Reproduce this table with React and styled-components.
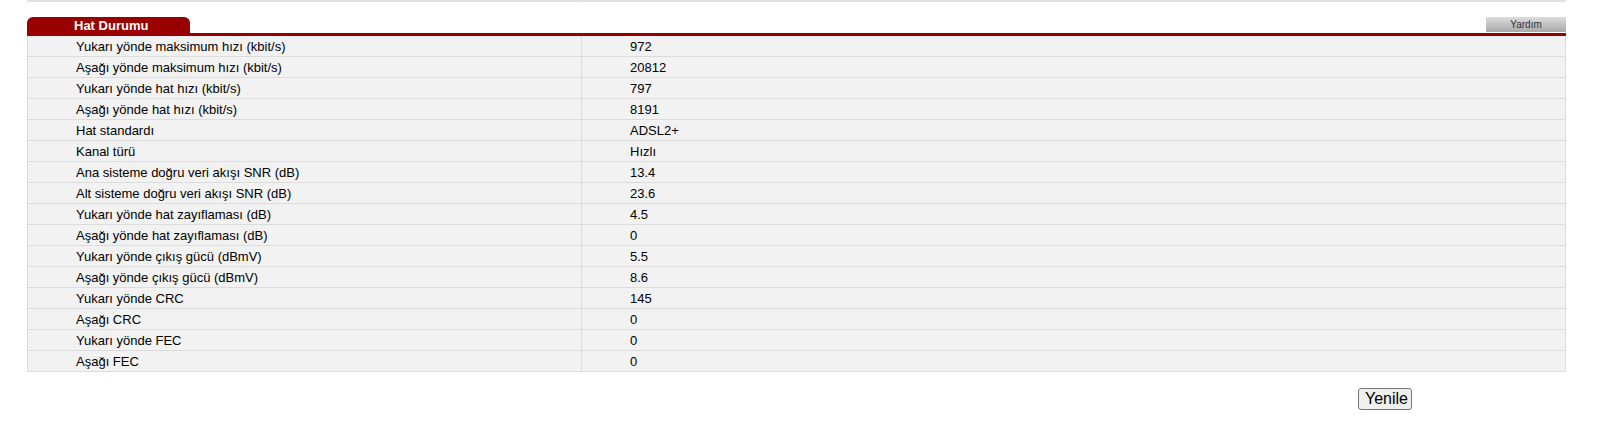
import React from "react";
import styled, { createGlobalStyle } from "styled-components";

const rows = [
  ["Yukarı yönde maksimum hızı (kbit/s)", "972"],
  ["Aşağı yönde maksimum hızı (kbit/s)", "20812"],
  ["Yukarı yönde hat hızı (kbit/s)", "797"],
  ["Aşağı yönde hat hızı (kbit/s)", "8191"],
  ["Hat standardı", "ADSL2+"],
  ["Kanal türü", "Hızlı"],
  ["Ana sisteme doğru veri akışı SNR (dB)", "13.4"],
  ["Alt sisteme doğru veri akışı SNR (dB)", "23.6"],
  ["Yukarı yönde hat zayıflaması (dB)", "4.5"],
  ["Aşağı yönde hat zayıflaması (dB)", "0"],
  ["Yukarı yönde çıkış gücü (dBmV)", "5.5"],
  ["Aşağı yönde çıkış gücü (dBmV)", "8.6"],
  ["Yukarı yönde CRC", "145"],
  ["Aşağı CRC", "0"],
  ["Yukarı yönde FEC", "0"],
  ["Aşağı FEC", "0"],
];

const GlobalStyle = createGlobalStyle`
  body {
    margin: 0;
    background: #fff;
    font-family: "Liberation Sans", Arial, sans-serif;
  }
`;

const Page = styled.div`
  width: 1539px;
  margin-left: 27px;
`;

const PrevRow = styled.div`
  display: grid;
  grid-template-columns: 554px 1fr;
  height: 2px;
  background: #e2e2e2;

  .split {
    border-right: 1px solid #d0d0d0;
  }
`;

const Header = styled.div`
  display: flex;
  justify-content: space-between;
  align-items: flex-end;
  margin-top: 15px;
  border-bottom: 3px solid #990000;
`;

const Tab = styled.div`
  width: 163px;
  height: 16px;
  background: #990000;
  border-radius: 6px 6px 0 0;
  color: #fff;
  font-size: 13px;
  font-weight: bold;
  line-height: 17px;
  padding-left: 47px;
  box-sizing: border-box;
`;

const HelpButton = styled.div`
  width: 80px;
  height: 15px;
  margin-bottom: 1px;
  background: linear-gradient(#dcdcdc, #a9a9a9);
  color: #333;
  font-size: 10px;
  line-height: 15px;
  text-align: center;
`;

const Table = styled.div`
  border-left: 1px solid #dcdcdc;
  border-right: 1px solid #dcdcdc;
`;

const Row = styled.div`
  display: grid;
  grid-template-columns: 554px 1fr;
  height: 21px;
  background: #f2f2f2;
  border-bottom: 1px solid #dcdcdc;
  box-sizing: border-box;
`;

const Cell = styled.div`
  font-size: 13px;
  color: #000;
  line-height: 21px;
  padding-left: 48px;
  border-right: ${(p) => (p.$value ? "none" : "1px solid #dcdcdc")};
  white-space: nowrap;
`;

const Footer = styled.div`
  display: flex;
  justify-content: flex-end;
  padding-right: 154px;
  margin-top: 16px;
`;

const RefreshButton = styled.button`
  font-family: "Liberation Sans", Arial, sans-serif;
  font-size: 16px;
  height: 22px;
  width: 54px;
  padding: 0 6px;
  background: #efefef;
  color: #000;
  border: 1px solid #767676;
  border-radius: 3px;
  line-height: 18px;
`;

export default function App() {
  return (
    <>
      <GlobalStyle />
      <Page>
        <PrevRow>
          <div className="split" />
          <div />
        </PrevRow>
        <Header>
          <Tab>Hat Durumu</Tab>
          <HelpButton>Yardım</HelpButton>
        </Header>
        <Table>
          {rows.map(([label, value]) => (
            <Row key={label}>
              <Cell>{label}</Cell>
              <Cell $value>{value}</Cell>
            </Row>
          ))}
        </Table>
        <Footer>
          <RefreshButton>Yenile</RefreshButton>
        </Footer>
      </Page>
    </>
  );
}
